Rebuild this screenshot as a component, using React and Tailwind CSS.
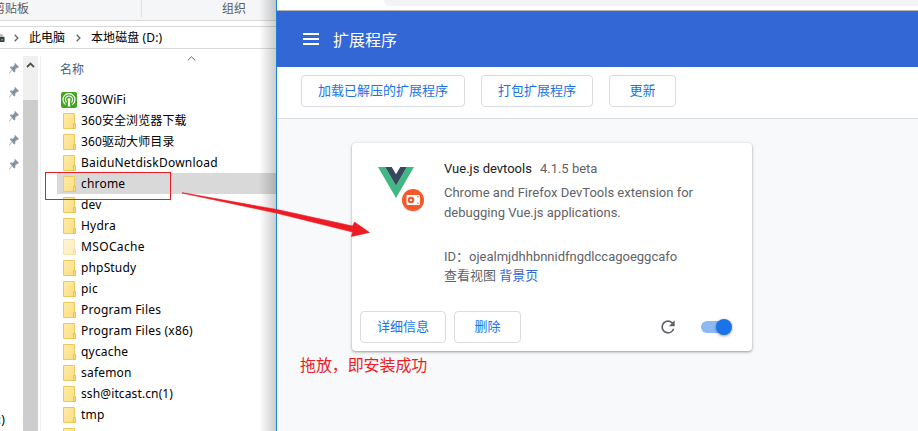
const ui = "font-['Noto_Sans','Noto_Sans_CJK_SC',sans-serif]";
const cjk = "font-['Noto_Sans_CJK_SC',sans-serif]";
const roboto = "font-['Roboto','Noto_Sans_CJK_SC',sans-serif]";

const files = [
  ['360WiFi', 'tracking-[0.1px]'],
  ['360安全浏览器下载', 'tracking-[0.1px]'],
  ['360驱动大师目录', 'tracking-[0.1px]'],
  ['BaiduNetdiskDownload', 'tracking-[0.22px]'],
  ['chrome', 'tracking-[0.2px]'],
  ['dev', 'tracking-[0.2px]'],
  ['Hydra', 'tracking-[0.2px]'],
  ['MSOCache', 'tracking-[0.35px]'],
  ['phpStudy', 'tracking-[0.15px]'],
  ['pic', 'tracking-[0.2px]'],
  ['Program Files', 'tracking-[0.22px]'],
  ['Program Files (x86)', 'tracking-[0.22px]'],
  ['qycache', 'tracking-[0.2px]'],
  ['safemon', 'tracking-[0.2px]'],
  ['ssh@itcast.cn(1)', 'tracking-[0.12px]'],
  ['tmp', 'tracking-[0.2px]'],
  ['usr', 'tracking-[0.2px]'],
];

function Folder({ faded }) {
  return (
    <svg width="16" height="18" viewBox="0 0 16 18" className={faded ? 'shrink-0 opacity-50' : 'shrink-0'}>
      <defs>
        <linearGradient id="fold" x1="0" y1="0" x2="1" y2="1">
          <stop offset="0" stopColor="#ffeba6" />
          <stop offset="1" stopColor="#fcdf83" />
        </linearGradient>
      </defs>
      <path d="M2.5 1.5h11v15h-11z" fill="url(#fold)" stroke="#ecc95c" />
      <path d="M12.5 11.5h2v5h-2z" fill="#fbe08a" stroke="#e8c250" />
    </svg>
  );
}

function Wifi() {
  return (
    <svg width="16" height="16" viewBox="0 0 16 16" className="shrink-0">
      <rect width="16" height="16" rx="2" fill="#43a51f" />
      <g fill="none" stroke="#fff" strokeWidth="1.1">
        <path d="M4.6 12.6a6 6 0 1 1 6.8 0" />
        <path d="M5.7 10.4a3.6 3.6 0 1 1 4.6 0" />
      </g>
      <circle cx="8" cy="7.6" r="1.5" fill="#fff" />
      <path d="M7.3 8h1.4l.6 6.5H6.7z" fill="#fff" />
    </svg>
  );
}

function Pin() {
  return (
    <svg width="10" height="11" viewBox="0 0 10 11">
      <path d="M6 0l4 4-1 .8-.8-.1-2 2 .1 1.8-1 1L3 7.3.5 10.5 0 10l3-3.2L.8 4.600l1-1 1.900.1 2-2L5.300.8z" fill="#8494a2" />
    </svg>
  );
}

function Chevron() {
  return (
    <svg width="5" height="8" viewBox="0 0 5 8">
      <path d="M.7.8L3.900 4 .7 7.200" fill="none" stroke="#666" strokeWidth="1.300" />
    </svg>
  );
}

function Explorer() {
  return (
    <div className={`relative h-[431px] w-[276px] shrink-0 overflow-hidden bg-white text-[12px] text-black ${ui}`}>
      <div className="flex h-[21px] border-b border-[#d9dadb] bg-[#f5f6f7] leading-[17px] text-[#5c5c5c]">
        <div className="h-[17px] w-[142px] shrink-0 border-r border-[#dedfe0]">
          <span className="-ml-[7px] block whitespace-nowrap">剪贴板</span>
        </div>
        <span className="pl-[80px]">组织</span>
      </div>
      <div className="mt-[5px] flex h-[23px] items-center border-y border-[#d9d9d9] leading-[21px]">
        <svg width="5" height="8" viewBox="0 0 5 8" className="shrink-0">
          <path d="M0 0h2l2 3v5H0z" fill="#b9bcbf" />
          <path d="M0 3h4.500v5H0z" fill="#3c3f42" />
          <path d="M1 5h2v1.500H1z" fill="#2ed058" />
        </svg>
        <span className="ml-[9px]"><Chevron /></span>
        <span className="ml-[10px] w-[36px] whitespace-nowrap">此电脑</span>
        <span className="ml-[11px]"><Chevron /></span>
        <span className="ml-[10px] whitespace-nowrap tracking-[0.1px]">本地磁盘 (D:)</span>
      </div>
      <div className="flex h-[382px]">
        <div className="relative w-[23px] shrink-0">
          <div className="flex flex-col gap-[13px] pl-[9px] pt-[14px]">
            <Pin /><Pin /><Pin /><Pin /><Pin />
          </div>
          <span className="absolute left-[-2px] top-[362px] leading-[18px]"><span className="text-[#2aa3d8]">:</span>)</span>
        </div>
        <div className="w-[15px] shrink-0 pt-[7px]">
          <div className="flex h-[44px] justify-center bg-[#f0f0f0] pt-[6px]">
            <svg width="9" height="6" viewBox="0 0 9 6">
              <path d="M1 5l3.500-3.500L8 5" fill="none" stroke="#505050" strokeWidth="1.800" />
            </svg>
          </div>
          <div className="h-[331px] bg-[#cdcdcd]" />
        </div>
        <div className="mt-[7px] w-[3px] shrink-0 border-r border-[#f0f0f0]" />
        <div className="min-w-0 flex-1">
          <div className="flex h-[40px] pl-[19px] pt-[11px] leading-[20px] text-[#4c607a]">
            <span className="w-[127px]">名称</span>
            <svg width="9" height="5" viewBox="0 0 9 5" className="-mt-[4px]">
              <path d="M.8 4.400L4.500.8l3.700 3.600" fill="none" stroke="#666" />
            </svg>
          </div>
          {files.map(([name, tracking], i) => (
            <div key={name} className={`ml-[16px] flex h-[21px] items-center pl-[4px] ${i === 4 ? 'bg-[#d9d9d9]' : ''}`}>
              {i === 0 ? <Wifi /> : <Folder faded={i === 7} />}
              <span className={`ml-[4px] whitespace-nowrap leading-[20px] ${tracking}`}>{name}</span>
            </div>
          ))}
        </div>
      </div>
      <div className="absolute inset-y-0 right-0 w-[17px] bg-gradient-to-r from-transparent to-black/20" />
    </div>
  );
}

function Button({ children, className }) {
  return (
    <button className={`flex h-[32px] items-center justify-center rounded-[4px] border border-[#dadce0] bg-white pb-[3px] text-[13px] text-[#1a73e8] ${cjk} ${className}`}>
      {children}
    </button>
  );
}

function VueIcon() {
  return (
    <svg width="50" height="50" viewBox="0 0 50 50" className="shrink-0 overflow-visible">
      <path d="M0 0h7.200L18 18.700 28.800 0H36L18 31z" fill="#41b883" />
      <path d="M7.200 0h6.500L18 7.300 22.300 0h6.500L18 18.700z" fill="#35495e" />
      <circle cx="35" cy="34" r="11" fill="#000" opacity=".12" />
      <circle cx="35" cy="33" r="11" fill="#f4592b" />
      <rect x="28.500" y="28" width="13.500" height="10" rx="1" fill="#fff" />
      <circle cx="33" cy="33" r="3.300" fill="#f4592b" />
      <rect x="32" y="32" width="2" height="2" fill="#fff" />
      <circle cx="40" cy="29.800" r=".7" fill="#f4592b" />
      <circle cx="40" cy="36.200" r=".7" fill="#f4592b" />
    </svg>
  );
}

function ExtensionCard() {
  return (
    <div className="flex h-[208px] w-[400px] flex-col rounded-[4px] bg-white shadow-[0_1px_2px_rgba(60,64,67,0.35),0_1px_3px_1px_rgba(60,64,67,0.15)]">
      <div className="flex h-[160px] pl-[26px] pt-[24px]">
        <VueIcon />
        <div className="ml-[16px] -mt-[9px] text-[13px] leading-[20px] text-[#5f6368]">
          <div className="flex h-[24px] items-center pb-[3px]">
            <span className="text-[#202124]">Vue.js devtools</span>
            <span className="ml-[8px]">4.1.5 beta</span>
          </div>
          <div className="whitespace-nowrap pt-px">Chrome and Firefox DevTools extension for<br />debugging Vue.js applications.</div>
          <div className="mt-[24px] whitespace-nowrap">ID：ojealmjdhhbnnidfngdlccagoeggcafo</div>
          <div className="-mt-px whitespace-nowrap">查看视图 <span className="text-[#3367d6]">背景页</span></div>
        </div>
      </div>
      <div className="mt-[8px] flex items-center px-[8px]">
        <Button className="w-[86px]">详细信息</Button>
        <Button className="ml-[8px] w-[67px]">删除</Button>
        <svg width="20" height="20" viewBox="0 0 24 24" className="ml-[137px]">
          <path d="M17.650 6.350A7.958 7.958 0 0 0 12 4a8 8 0 1 0 7.730 10h-2.080A5.990 5.990 0 0 1 12 18a6 6 0 1 1 0-12c1.660 0 3.140.69 4.220 1.780L13 11h7V4z" fill="#5f6368" />
        </svg>
        <div className="ml-[23px] flex h-[12px] w-[28px] items-center rounded-full bg-[#8cb8f4] pl-[15px]">
          <div className="h-[16px] w-[16px] shrink-0 rounded-full bg-[#1a73e8] shadow-[0_1px_3px_rgba(0,0,0,0.4)]" />
        </div>
      </div>
    </div>
  );
}

function Browser() {
  return (
    <div className={`flex h-[431px] min-w-0 flex-1 flex-col border-l border-[#1883d7] bg-[#f8f9fa] ${roboto}`}>
      <div className="h-[11px] border-b border-[#b5b5b5] bg-white pl-[107px]">
        <div className="h-[6px] rounded-bl-[14px] bg-[#f1f3f4]" />
      </div>
      <div className="flex h-[56px] items-center bg-[#3367d6] pl-[26px] text-white">
        <svg width="16" height="12" viewBox="0 0 16 12">
          <path d="M0 0h16v2H0zM0 5h16v2H0zM0 10h16v2H0z" fill="#fff" />
        </svg>
        <h1 className={`ml-[14px] text-[16px] ${cjk}`}>扩展程序</h1>
      </div>
      <div className="flex h-[52px] gap-[16px] border-b border-[#dcdddf] bg-white pl-[24px] pt-[8px]">
        <Button className="w-[164px]">加载已解压的扩展程序</Button>
        <Button className="w-[112px]">打包扩展程序</Button>
        <Button className="w-[67px]">更新</Button>
      </div>
      <div className="pl-[75px] pt-[24px]">
        <ExtensionCard />
      </div>
      <p className={`pl-[23px] pt-[1px] text-[16px] leading-[24px] tracking-[-0.1px] text-[#ed1c24] ${cjk}`}>拖放，即安装成功</p>
    </div>
  );
}

export default function App() {
  return (
    <div className="relative flex h-[431px] w-[918px] overflow-hidden">
      <Explorer />
      <Browser />
      <div className="absolute left-[45px] top-[172px] h-[28px] w-[126px] border border-[#ed1c24]" />
      <svg width="190" height="46" viewBox="0 0 190 46" className="absolute left-[181px] top-[191px]">
        <path d="M1 2L2 1.800 96 18.500 171.500 35 173.500 31 188.500 41.500 170.500 45.500 171.500 41 95 22z" fill="#ed1c24" stroke="#ed1c24" strokeWidth=".6" />
      </svg>
    </div>
  );
}
